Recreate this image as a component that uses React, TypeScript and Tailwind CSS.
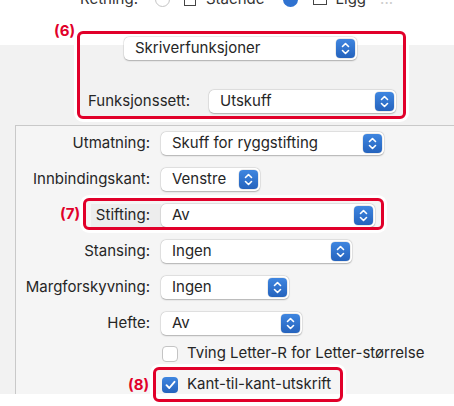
import type { ReactNode } from "react";

// blue up/down stepper used by mac popups
function Stepper() {
  return (
    <div className="flex h-[19px] w-[19px] shrink-0 items-center justify-center rounded-[4px] bg-gradient-to-b from-[#3f86e0] to-[#2563bd] shadow-[0_0_0_0.5px_rgba(0,0,0,0.15)]">
      <svg width="9" height="13" viewBox="0 0 9 13" fill="none">
        <path d="M1.5 4.5 L4.5 1.5 L7.5 4.5" stroke="white" strokeWidth="1.6" strokeLinecap="round" strokeLinejoin="round" />
        <path d="M1.5 8.5 L4.5 11.5 L7.5 8.5" stroke="white" strokeWidth="1.6" strokeLinecap="round" strokeLinejoin="round" />
      </svg>
    </div>
  );
}

type PopupProps = {
  value: string;
  width: string;
};

function Popup({ value, width }: PopupProps) {
  return (
    <div
      className={`flex h-[23px] items-center justify-between rounded-[5px] bg-white pl-[11px] pr-[2px] shadow-[0_0.5px_1.5px_rgba(0,0,0,0.25),0_0_0_0.5px_rgba(0,0,0,0.08)] ${width}`}
    >
      <span>{value}</span>
      <Stepper />
    </div>
  );
}

function Row({ label, children, shaded }: { label: string; children: ReactNode; shaded?: boolean }) {
  return (
    <div className="flex h-[23px] items-center">
      <div className="flex w-[145px] shrink-0 justify-end pr-[11px]">
        <span
          className={
            shaded
              ? "-mr-[11px] flex h-[23px] items-center bg-[#ededed] pl-[5px] pr-[11px]"
              : ""
          }
        >
          {label}
        </span>
      </div>
      {children}
    </div>
  );
}

function Check({ checked, label }: { checked?: boolean; label: string }) {
  return (
    <div className="flex h-[17px] items-center pl-[146px]">
      {checked ? (
        <div className="flex h-[16px] w-[16px] items-center justify-center rounded-[4px] bg-gradient-to-b from-[#3f86e0] to-[#2563bd]">
          <svg width="11" height="10" viewBox="0 0 11 10" fill="none">
            <path d="M1.5 5.2 L4.3 8 L9.5 1.8" stroke="white" strokeWidth="1.9" strokeLinecap="round" strokeLinejoin="round" />
          </svg>
        </div>
      ) : (
        <div className="h-[16px] w-[16px] rounded-[4px] border border-[#c4c4c4] bg-white" />
      )}
      <span className="ml-[9px]">{label}</span>
    </div>
  );
}

function Mark({ className }: { className: string }) {
  return (
    <div
      className={`pointer-events-none absolute rounded-[6px] border-[3px] border-[#e1002a] shadow-[0_0_0_3px_white] ${className}`}
    />
  );
}

function Num({ text, className }: { text: string; className: string }) {
  return (
    <div className={`absolute text-[15px] font-bold leading-none text-[#e1002a] ${className}`}>
      {text}
    </div>
  );
}

export default function App() {
  return (
    <div
      className="relative flex h-[406px] w-[454px] flex-col overflow-hidden bg-white text-[15px] text-[#262626]"
      style={{ fontFamily: "Inter, 'Liberation Sans', sans-serif" }}
    >
      {/* TOP (clipped orientation row) */}
      <div className="flex h-[45px] shrink-0 flex-col">
        <div className="-mt-[11px] flex h-[20px] items-center pl-[80px] text-[#333]">
          <span>Retning:</span>
          <div className="ml-[17px] h-[15px] w-[15px] rounded-full border border-[#c4c4c4] bg-white" />
          <div className="ml-[14px] h-[14px] w-[12px] border-[1.5px] border-[#444]" />
          <span className="ml-[10px]">Stående</span>
          <div className="ml-[18px] h-[15px] w-[15px] rounded-full bg-[#2f72d0]" />
          <div className="ml-[15px] h-[12px] w-[14px] border-[1.5px] border-[#444]" />
          <span className="ml-[9px]">Ligg</span>
          <span className="ml-[14px] text-[#ccc]">...</span>
        </div>
      </div>

      {/* GRAY AREA */}
      <div className="flex h-[349px] shrink-0 flex-col bg-[#f2f2f2]">
        <div className="-mt-[8px] flex pl-[124px]">
          <Popup value="Skriverfunksjoner" width="w-[233px]" />
        </div>

        <div className="mt-[30px] flex h-[23px] items-center pl-[88px]">
          <span className="w-[110px]">Funksjonssett:</span>
          <div className="ml-[11px]">
            <Popup value="Utskuff" width="w-[187px]" />
          </div>
        </div>

        {/* INNER PANEL */}
        <div className="ml-[15px] mt-[12px] flex flex-1 flex-col border-l-[1.5px] border-t-[1.5px] border-[#c9c9c9] bg-[#f5f5f5] pt-[6px]">
          <div className="flex flex-col gap-[13px]">
            <Row label="Utmatning:">
              <Popup value="Skuff for ryggstifting" width="w-[223px]" />
            </Row>
            <Row label="Innbindingskant:">
              <Popup value="Venstre" width="w-[99px]" />
            </Row>
            <Row label="Stifting:" shaded>
              <Popup value="Av" width="w-[214px]" />
            </Row>
            <Row label="Stansing:">
              <Popup value="Ingen" width="w-[191px]" />
            </Row>
            <Row label="Margforskyvning:">
              <Popup value="Ingen" width="w-[128px]" />
            </Row>
            <Row label="Hefte:">
              <Popup value="Av" width="w-[141px]" />
            </Row>
          </div>
          <div className="mt-[10px] flex flex-col gap-[14px]">
            <Check label="Tving Letter-R for Letter-størrelse" />
            <Check checked label="Kant-til-kant-utskrift" />
          </div>
        </div>
      </div>

      {/* ANNOTATIONS */}
      <Mark className="left-[77px] top-[31px] h-[88px] w-[329px]" />
      <Num text="(6)" className="left-[54px] top-[23px]" />
      <Mark className="left-[83px] top-[198px] h-[32px] w-[301px]" />
      <Num text="(7)" className="left-[60px] top-[206px]" />
      <Mark className="left-[153px] top-[367px] h-[35px] w-[190px]" />
      <Num text="(8)" className="left-[128px] top-[377px]" />
    </div>
  );
}
